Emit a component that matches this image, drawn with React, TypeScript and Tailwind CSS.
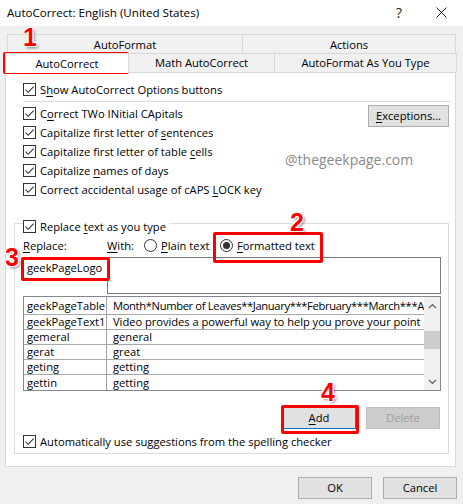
import React from 'react';

function Check() {
  return (
    <span className="w-[13px] h-[13px] border border-[#333333] bg-white flex items-center justify-center shrink-0">
      <svg width="11" height="11" viewBox="0 0 11 11">
        <path d="M1.6 5.6 L4.2 8.3 L9.6 2.6" fill="none" stroke="#333333" strokeWidth="1.1" />
      </svg>
    </span>
  );
}

function Radio({ on }: { on?: boolean }) {
  return (
    <span className="w-[13px] h-[13px] rounded-full border border-[#333333] bg-white flex items-center justify-center shrink-0">
      {on && <span className="w-[7px] h-[7px] rounded-full bg-[#333333]" />}
    </span>
  );
}

function U({ children }: { children: React.ReactNode }) {
  return <span className="underline underline-offset-[2px] decoration-[1px]">{children}</span>;
}

function CheckRow({ children }: { children: React.ReactNode }) {
  return (
    <div className="flex items-center h-[19px]">
      <Check />
      <span className="ml-[4px] whitespace-nowrap">{children}</span>
    </div>
  );
}

const rows: [string, string, string][] = [
  ['geekPageTable', 'Month*Number of Leaves**January***February***March***A', 'tracking-[-0.35px]'],
  ['geekPageText1', 'Video provides a powerful way to help you prove your point', 'tracking-[-0.05px]'],
  ['gemeral', 'general', ''],
  ['gerat', 'great', ''],
  ['geting', 'getting', ''],
  ['gettin', 'getting', ''],
];

function Num({ n, cls }: { n: string; cls: string }) {
  return (
    <div
      className={`absolute font-['Liberation_Sans',Arial,sans-serif] font-bold text-[25px] leading-none text-[#ff0000] [text-shadow:1px_0_0_#fff,-1px_0_0_#fff,0_1px_0_#fff,0_-1px_0_#fff,1px_1px_0_#fff,-1px_-1px_0_#fff,1px_-1px_0_#fff,-1px_1px_0_#fff,2px_2px_3px_rgba(0,0,0,0.45)] ${cls}`}
    >
      {n}
    </div>
  );
}

export default function App() {
  return (
    <div className="relative w-[463px] h-[504px] overflow-hidden bg-[#f0f0f0] text-black font-['Open_Sans',sans-serif] text-[11.2px] leading-none">
      {/* title bar */}
      <div className="h-[26px] bg-white flex items-center pl-[7px] pb-[1px]">
        <span className="text-[11.6px]">AutoCorrect: English (United States)</span>
        <span className="ml-auto mr-[34px] text-[14px] text-[#222]">?</span>
        <svg width="11" height="11" viewBox="0 0 11 11" className="mr-[16px]">
          <path d="M0.5 0.5 L10.5 10.5 M10.5 0.5 L0.5 10.5" stroke="#222" strokeWidth="1" />
        </svg>
      </div>

      {/* tabs */}
      <div className="mt-[8px] flex ml-[7px]">
        <div className="w-[236px] h-[20px] pt-[2px] border border-[#d9d9d9] flex items-center justify-center">AutoFormat</div>
        <div className="w-[214px] h-[20px] pt-[2px] -ml-px border border-[#d9d9d9] flex items-center justify-center">Actions</div>
      </div>
      <div className="-mt-px flex ml-[5px] items-end">
        <div className="relative z-10 w-[124px] h-[20px] -mb-px bg-white border border-b-0 border-[#d9d9d9] flex items-center justify-center">AutoCorrect</div>
        <div className="w-[147px] h-[19px] -ml-px border border-b-0 border-[#d9d9d9] flex items-center justify-center">Math AutoCorrect</div>
        <div className="w-[183px] h-[19px] -ml-px border border-b-0 border-[#d9d9d9] flex items-center justify-center">AutoFormat As You Type</div>
      </div>

      {/* panel */}
      <div className="ml-[5px] w-[451px] h-[395px] bg-white border border-[#d9d9d9] flex flex-col">
        <div className="pl-[17px] pt-[7px]">
          <CheckRow>S<U>h</U>ow AutoCorrect Options buttons</CheckRow>
        </div>
        <div className="ml-[17px] mr-[5px] mt-[2px] h-px bg-[#dcdcdc]" />
        <div className="flex pl-[17px] pr-[6px] mt-[2px]">
          <div className="flex flex-col">
            <CheckRow>C<U>o</U>rrect TWo INitial CApitals</CheckRow>
            <CheckRow>Capitalize first letter of <U>s</U>entences</CheckRow>
            <CheckRow>Capitalize first letter of table <U>c</U>ells</CheckRow>
            <CheckRow>Capitalize <U>n</U>ames of days</CheckRow>
            <CheckRow>Correct accidental usage of cAPS <U>L</U>OCK key</CheckRow>
          </div>
          <div className="ml-auto pt-[1px]">
            <div className="w-[81px] h-[22px] bg-[#e1e1e1] border border-[#adadad] flex items-center justify-center">
              <span><U>E</U>xceptions...</span>
            </div>
          </div>
        </div>

        {/* group box */}
        <div className="mt-[24px] ml-[8px] mr-[6px] border border-[#dcdcdc] flex flex-col pb-[2px]">
          <div className="-mt-[7px] ml-[8px] w-fit bg-white pr-[3px]">
            <CheckRow>Replace <U>t</U>ext as you type</CheckRow>
          </div>
          <div className="flex items-center h-[19px] pl-[8px]">
            <span className="w-[84px]"><U>R</U>eplace:</span>
            <span className="w-[37px]"><U>W</U>ith:</span>
            <div className="w-[76px] flex items-center">
              <Radio />
              <span className="ml-[4px]"><U>P</U>lain text</span>
            </div>
            <div className="flex items-center">
              <Radio on />
              <span className="ml-[4px]"><U>F</U>ormatted text</span>
            </div>
          </div>
          <div className="flex pl-[8px] mt-[2px]">
            <div className="w-[84px] h-[21px] flex items-center pl-[4px]">geekPageLogo</div>
            <div className="w-[334px] h-[37px] border border-[#7a7a7a] bg-white" />
          </div>
          <div className="ml-[8px] mt-[2px] w-[418px] h-[95px] border border-[#828790] flex">
            <div className="flex-1 flex flex-col min-w-0">
              {rows.map(([a, b, t], i) => (
                <div
                  key={a}
                  className={`flex ${i === 0 ? 'h-[18px]' : 'h-[15px]'} ${i < rows.length - 1 ? 'border-b border-[#a9a9a9]' : ''}`}
                >
                  <div className="w-[83px] shrink-0 border-r border-[#a0a0a0] pl-[3px] flex items-center whitespace-nowrap">{a}</div>
                  <div className={`flex-1 min-w-0 overflow-hidden pl-[6px] flex items-center whitespace-nowrap ${t}`}>{b}</div>
                </div>
              ))}
            </div>
            <div className="w-[16px] bg-[#f0f0f0] flex flex-col">
              <div className="h-[17px] flex items-center justify-center">
                <svg width="9" height="6" viewBox="0 0 9 6"><path d="M1 5 L4.5 1.5 L8 5" fill="none" stroke="#606060" strokeWidth="1.2" /></svg>
              </div>
              <div className="mt-[17px] h-[18px] bg-[#cdcdcd]" />
              <div className="mt-auto h-[17px] flex items-center justify-center">
                <svg width="9" height="6" viewBox="0 0 9 6"><path d="M1 1 L4.5 4.5 L8 1" fill="none" stroke="#606060" strokeWidth="1.2" /></svg>
              </div>
            </div>
          </div>
          <div className="mt-[16px] flex justify-end pr-[8px]">
            <div className="w-[74px] h-[22px] bg-[#e1e1e1] border border-[#0078d7] flex items-center justify-center">
              <span><U>A</U>dd</span>
            </div>
            <div className="ml-[10px] w-[74px] h-[22px] bg-[#cccccc] border border-[#bfbfbf] flex items-center justify-center text-[#a0a0a0]">
              Delete
            </div>
          </div>
          <div className="mt-[3px] pl-[8px]">
            <CheckRow>Automatically use su<U>g</U>gestions from the spelling checker</CheckRow>
          </div>
        </div>
      </div>

      {/* dialog buttons */}
      <div className="mt-[10px] flex justify-end pr-[6px] gap-[11px]">
        <div className="w-[74px] h-[22px] bg-[#e1e1e1] border border-[#adadad] flex items-center justify-center">OK</div>
        <div className="w-[74px] h-[22px] bg-[#e1e1e1] border border-[#adadad] flex items-center justify-center">Cancel</div>
      </div>

      {/* watermark */}
      <div className="absolute left-[285px] top-[153px] text-[14px] text-[#8a8a8a]">@thegeekpage.com</div>

      {/* annotations */}
      <div className="absolute left-[3px] top-[52px] w-[126px] h-[22px] border-[3px] border-[#ff0000] rounded-[2px]" />
      <div className="absolute left-[213px] top-[232px] w-[110px] h-[31px] border-[3px] border-[#ff0000] rounded-[2px]" />
      <div className="absolute left-[21px] top-[257px] w-[89px] h-[24px] border-[3px] border-[#ff0000] rounded-[2px]" />
      <div className="absolute left-[281px] top-[405px] w-[78px] h-[29px] border-[3px] border-[#ff0000] rounded-[2px]" />
      <Num n="1" cls="left-[23px] top-[25px]" />
      <Num n="2" cls="left-[290px] top-[210px]" />
      <Num n="3" cls="left-[5px] top-[245px]" />
      <Num n="4" cls="left-[321px] top-[380px]" />
    </div>
  );
}
